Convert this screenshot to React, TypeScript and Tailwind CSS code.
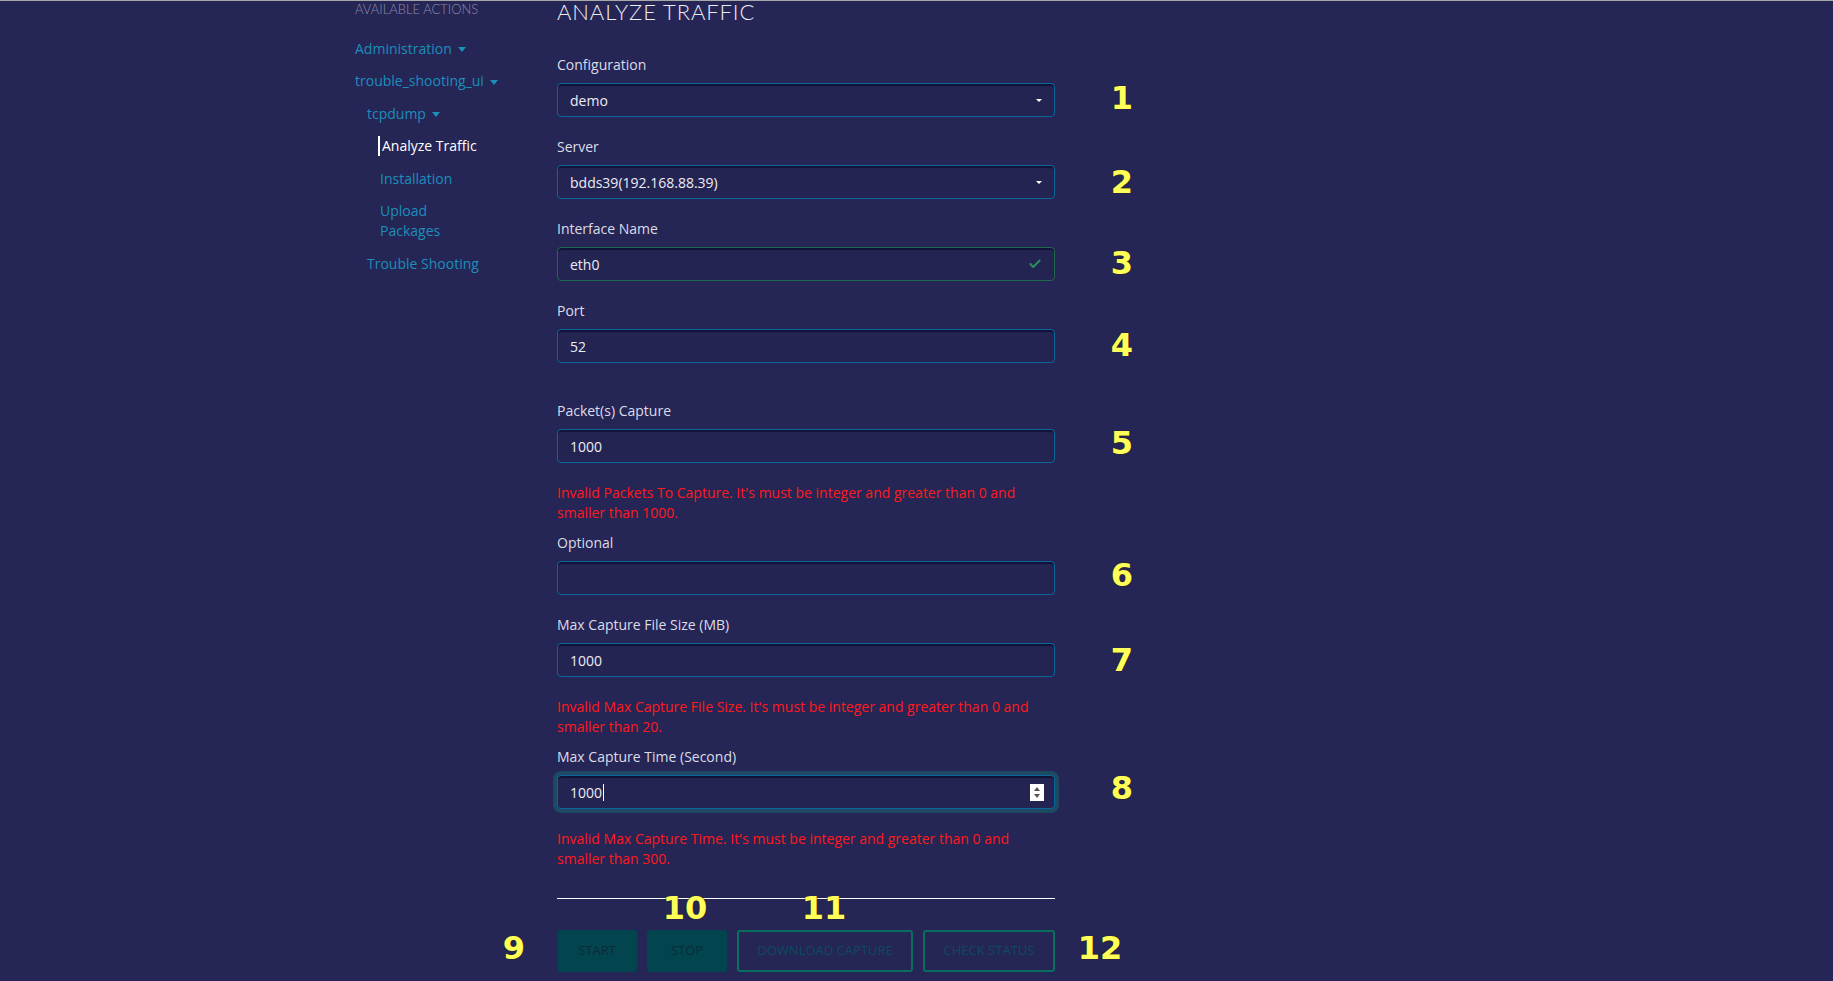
import { Check } from "lucide-react";

const Caret = () => (
  <span className="inline-block ml-1.5 align-middle w-0 h-0 border-l-[4px] border-r-[4px] border-t-[5px] border-l-transparent border-r-transparent border-t-[#1c8fba]" />
);

const Label = ({ text, className = "" }: { text: string; className?: string }) => (
  <div className={`text-[14px] leading-5 text-[#dcdce8] ${className}`}>{text}</div>
);

const ErrorText = ({ text }: { text: string }) => (
  <p className="mt-5 text-[14px] leading-5 text-[#ff1a1a] pr-5">{text}</p>
);

const Input = ({
  value,
  variant = "text",
}: {
  value?: string;
  variant?: "text" | "select" | "valid" | "focus";
}) => {
  const border =
    variant === "valid" ? "border-[#1d6b4c]" : "border-[#0b669c]";
  const ring = variant === "focus" ? "ring-4 ring-[#1d4a62]" : "";
  return (
    <div
      className={`mt-2 h-[34px] flex items-center justify-between rounded-[4px] border ${border} ${ring} bg-[#242453] shadow-[inset_0_2px_1px_rgba(0,0,30,0.5)] pl-3 pr-3 text-[14px] text-[#ececf4]`}
    >
      <span className="flex items-center">
        {value}
        {variant === "focus" && <span className="ml-px w-px h-[17px] bg-white" />}
      </span>
      {variant === "select" && (
        <span className="w-0 h-0 border-l-[3px] border-r-[3px] border-t-[3px] border-l-transparent border-r-transparent border-t-white" />
      )}
      {variant === "valid" && <Check className="w-[14px] h-[14px] text-[#2f8a5c]" strokeWidth={3.5} />}
      {variant === "focus" && (
        <span className="-mr-[2px] w-[14px] h-[17px] bg-white flex flex-col items-center justify-center gap-[3px]">
          <span className="w-0 h-0 border-l-[3px] border-r-[3px] border-b-[4px] border-l-transparent border-r-transparent border-b-[#555]" />
          <span className="w-0 h-0 border-l-[3px] border-r-[3px] border-t-[4px] border-l-transparent border-r-transparent border-t-[#555]" />
        </span>
      )}
    </div>
  );
};

const marks = [
  { n: "1", cls: "left-[1122px] top-[97px]" },
  { n: "2", cls: "left-[1122px] top-[181px]" },
  { n: "3", cls: "left-[1122px] top-[262px]" },
  { n: "4", cls: "left-[1122px] top-[344px]" },
  { n: "5", cls: "left-[1122px] top-[442px]" },
  { n: "6", cls: "left-[1122px] top-[574px]" },
  { n: "7", cls: "left-[1122px] top-[659px]" },
  { n: "8", cls: "left-[1122px] top-[787px]" },
  { n: "9", cls: "left-[514px] top-[947px]" },
  { n: "10", cls: "left-[685px] top-[907px]" },
  { n: "11", cls: "left-[824px] top-[907px]" },
  { n: "12", cls: "left-[1100px] top-[947px]" },
];

export default function App() {
  return (
    <div className="relative min-h-screen h-[981px] overflow-hidden bg-[#252556] border-t border-[#a8a8a8] font-['Open_Sans','Noto_Sans',sans-serif]">
      <div className="flex pl-[355px]">
        {/* Sidebar */}
        <aside className="w-[202px] flex flex-col gap-[12.5px] text-[14px] leading-5 text-[#1c8fba]">
          <div className="mb-[9px] text-[13px] leading-[16px] uppercase font-light text-[#8b8ba6] font-['Lato',sans-serif]">
            Available Actions
          </div>
          <div>
            Administration
            <Caret />
          </div>
          <div>
            trouble_shooting_ui
            <Caret />
          </div>
          <div className="ml-3">
            tcpdump
            <Caret />
          </div>
          <div className="ml-[23px] border-l-2 border-white pl-[2px] text-white">Analyze Traffic</div>
          <div className="ml-[25px]">Installation</div>
          <div className="ml-[25px] w-[80px]">Upload Packages</div>
          <div className="ml-3">Trouble Shooting</div>
        </aside>

        {/* Form */}
        <main className="w-[498px]">
          <h1 className="text-[22px] leading-[22px] font-light tracking-[0.9px] text-[#ececf4] font-['Lato',sans-serif]">
            ANALYZE TRAFFIC
          </h1>

          <Label text="Configuration" className="mt-[32px]" />
          <Input value="demo" variant="select" />

          <Label text="Server" className="mt-5" />
          <Input value="bdds39(192.168.88.39)" variant="select" />

          <Label text="Interface Name" className="mt-5" />
          <Input value="eth0" variant="valid" />

          <Label text="Port" className="mt-5" />
          <Input value="52" />

          <Label text="Packet(s) Capture" className="mt-[38px]" />
          <Input value="1000" />
          <ErrorText text="Invalid Packets To Capture. It's must be integer and greater than 0 and smaller than 1000." />

          <Label text="Optional" className="mt-[10px]" />
          <Input />

          <Label text="Max Capture File Size (MB)" className="mt-5" />
          <Input value="1000" />
          <ErrorText text="Invalid Max Capture File Size. It's must be integer and greater than 0 and smaller than 20." />

          <Label text="Max Capture Time (Second)" className="mt-[10px]" />
          <Input value="1000" variant="focus" />
          <ErrorText text="Invalid Max Capture Time. It's must be integer and greater than 0 and smaller than 300." />

          <hr className="mt-[29px] border-0 border-t border-white" />

          <div className="mt-[31px] flex gap-[10px]">
            <button className="w-[80px] h-[42px] rounded-[3px] bg-[#03454f] text-[13px] uppercase text-[#0b2a3a]">Start</button>
            <button className="w-[80px] h-[42px] rounded-[3px] bg-[#03454f] text-[13px] uppercase text-[#0b2a3a]">Stop</button>
            <button className="w-[176px] h-[42px] rounded-[3px] border-2 border-[#0a6e5e] text-[13px] uppercase text-[#0b4b5e]">
              Download Capture
            </button>
            <button className="w-[132px] h-[42px] rounded-[3px] border-2 border-[#0a6e5e] text-[13px] uppercase text-[#0b4b5e]">
              Check Status
            </button>
          </div>
        </main>
      </div>

      {marks.map((m) => (
        <span
          key={m.n}
          className={`absolute ${m.cls} -translate-x-1/2 -translate-y-1/2 text-[32px] leading-none font-bold text-[#ffff5a] font-['DejaVu_Sans',sans-serif] [text-shadow:0_0_1px_#3a3000,0_0_1px_#3a3000]`}
        >
          {m.n}
        </span>
      ))}
    </div>
  );
}
